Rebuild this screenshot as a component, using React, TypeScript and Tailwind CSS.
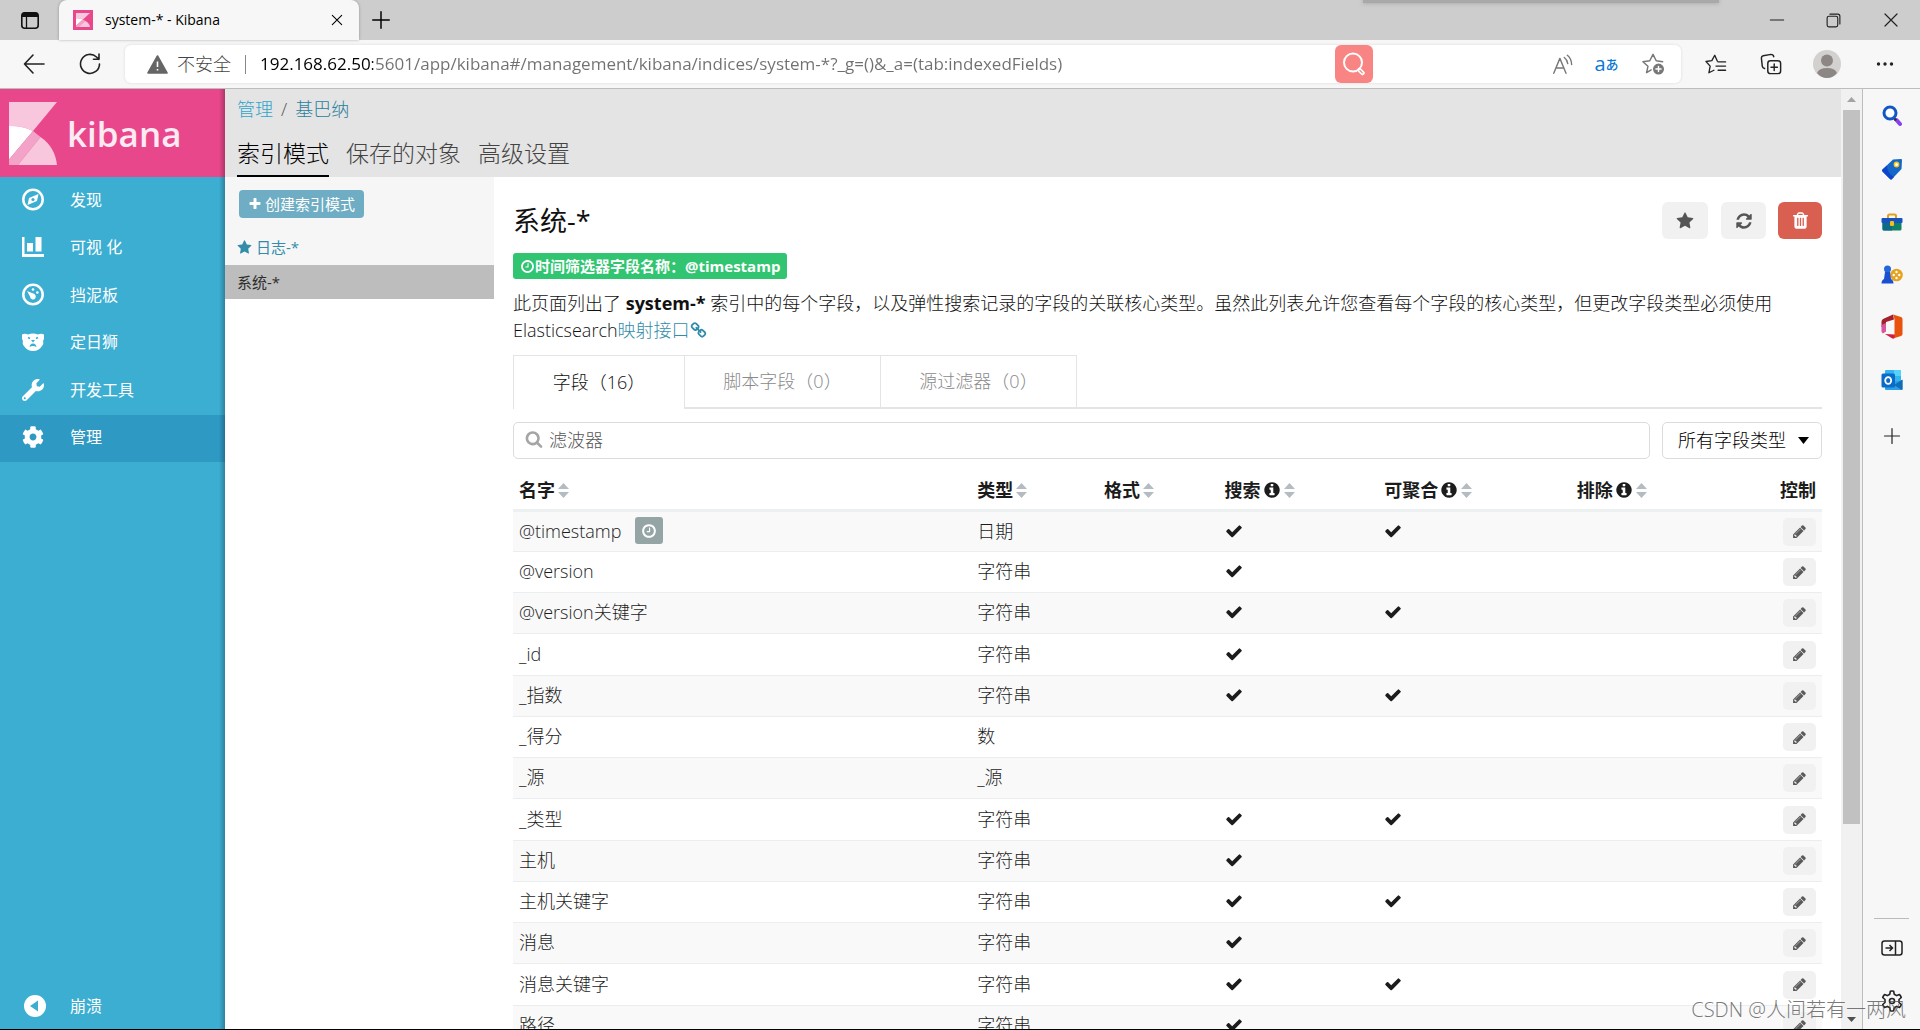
import type { ReactNode } from "react";
import { FaCog, FaWrench } from "react-icons/fa";

const GLYPHS = {
  check:
    "M1671 566q0 40-28 68l-724 724-136 136q-28 28-68 28t-68-28l-136-136-362-362q-28-28-28-68t28-68l136-136q28-28 68-28t68 28l294 295 656-657q28-28 68-28t68 28l136 136q28 28 28 68z",
  pencil:
    "M491 1536l91-91-235-235-91 91v107h128v128h107zm523-928q0-22-22-22-10 0-17 7l-542 542q-7 7-7 17 0 22 22 22 10 0 17-7l542-542q7-7 7-17zm-54-192l416 416-832 832h-416v-416zm683 96q0 53-37 90l-166 166-416-416 166-165q36-38 90-38 53 0 91 38l235 234q37 39 37 91z",
  search:
    "M1216 832q0-185-131.5-316.5t-316.5-131.5-316.5 131.5-131.5 316.5 131.5 316.5 316.5 131.5 316.5-131.5 131.5-316.5zm512 832q0 52-38 90t-90 38q-54 0-90-38l-343-342q-179 124-399 124-143 0-273.5-55.5t-225-150-150-225-55.5-273.5 55.5-273.5 150-225 225-150 273.5-55.5 273.5 55.5 225 150 150 225 55.5 273.5q0 220-124 399l343 343q37 37 37 90z",
  plus: "M1600 736v192q0 40-28 68t-68 28h-416v416q0 40-28 68t-68 28h-192q-40 0-68-28t-28-68v-416h-416q-40 0-68-28t-28-68v-192q0-40 28-68t68-28h416v-416q0-40 28-68t68-28h192q40 0 68 28t28 68v416h416q40 0 68 28t28 68z",
  star: "M1728 647q0 22-26 48l-363 354 86 500q1 7 1 20 0 21-10.5 35.5t-30.5 14.5q-19 0-40-12l-449-236-449 236q-22 12-40 12-21 0-31.5-14.5t-10.5-35.5q0-6 2-20l86-500-364-354q-25-27-25-48 0-37 56-46l502-73 225-455q19-41 49-41t49 41l225 455 502 73q56 9 56 46z",
  clock:
    "M1024 544v448q0 14-9 23t-23 9h-320q-14 0-23-9t-9-23v-64q0-14 9-23t23-9h224v-352q0-14 9-23t23-9h64q14 0 23 9t9 23zm416 352q0-148-73-273t-198-198-273-73-273 73-198 198-73 273 73 273 198 198 273 73 273-73 198-198 73-273zm224 0q0 209-103 385.5t-279.5 279.5-385.5 103-385.5-103-279.5-279.5-103-385.5 103-385.5 279.5-279.5 385.5-103 385.5 103 279.5 279.5 103 385.5z",
  info: "M1152 1376v-160q0-14-9-23t-23-9h-96v-512q0-14-9-23t-23-9h-320q-14 0-23 9t-9 23v160q0 14 9 23t23 9h96v320h-96q-14 0-23 9t-9 23v160q0 14 9 23t23 9h448q14 0 23-9t9-23zm-128-896v-160q0-14-9-23t-23-9h-192q-14 0-23 9t-9 23v160q0 14 9 23t23 9h192q14 0 23-9t9-23zm640 416q0 209-103 385.5t-279.5 279.5-385.5 103-385.5-103-279.5-279.5-103-385.5 103-385.5 279.5-279.5 385.5-103 385.5 103 279.5 279.5 103 385.5z",
  refresh:
    "M1639 1056q0 5-1 7-64 268-268 434.5t-478 166.5q-146 0-282.5-55t-243.5-157l-129 129q-19 19-45 19t-45-19-19-45v-448q0-26 19-45t45-19h448q26 0 45 19t19 45-19 45l-137 137q71 66 161 102t187 36q134 0 250-65t186-179q11-17 53-117 8-23 30-23h192q13 0 22.5 9.5t9.5 22.5zm25-800v448q0 26-19 45t-45 19h-448q-26 0-45-19t-19-45 19-45l138-138q-148-137-349-137-134 0-250 65t-186 179q-11 17-53 117-8 23-30 23h-199q-13 0-22.5-9.5t-9.5-22.5v-7q65-268 270-434.5t480-166.5q146 0 284 55.5t245 156.5l130-129q19-19 45-19t45 19 19 45z",
  trash:
    "M704 1376v-704q0-14-9-23t-23-9h-64q-14 0-23 9t-9 23v704q0 14 9 23t23 9h64q14 0 23-9t9-23zm256 0v-704q0-14-9-23t-23-9h-64q-14 0-23 9t-9 23v704q0 14 9 23t23 9h64q14 0 23-9t9-23zm256 0v-704q0-14-9-23t-23-9h-64q-14 0-23 9t-9 23v704q0 14 9 23t23 9h64q14 0 23-9t9-23zm-544-992h448l-48-117q-7-9-17-11h-317q-10 2-17 11zm928 32v64q0 14-9 23t-23 9h-96v948q0 83-47 143.5t-113 60.5h-832q-66 0-113-58.5t-47-141.5v-952h-96q-14 0-23-9t-9-23v-64q0-14 9-23t23-9h309l70-167q15-37 54-63t79-26h320q40 0 79 26t54 63l70 167h309q14 0 23 9t9 23z",
  chain:
    "M1520 1216q0-40-28-68l-208-208q-28-28-68-28-42 0-72 32 3 3 19 18.5t21.5 21.5 15 19 13 25.5 3.5 27.5q0 40-28 68t-68 28q-15 0-27.5-3.5t-25.5-13-19-15-21.5-21.5-18.5-19q-33 31-33 73 0 40 28 68l206 207q27 27 68 27 40 0 68-26l147-146q28-28 28-67zm-703-705q0-40-28-68l-206-207q-28-28-68-28-39 0-68 27l-147 146q-28 28-28 67 0 40 28 68l208 208q27 27 68 27 42 0 72-31-3-3-19-18.5t-21.5-21.5-15-19-13-25.5-3.5-27.5q0-40 28-68t68-28q15 0 27.5 3.5t25.5 13 19 15 21.5 21.5 18.5 19q33-31 33-73zm895 705q0 120-85 203l-147 146q-83 83-203 83-121 0-204-85l-206-207q-83-83-83-203 0-123 88-209l-88-88q-86 88-208 88-120 0-204-84l-208-208q-84-84-84-204t85-203l147-146q83-83 203-83 121 0 204 85l206 207q83 83 83 203 0 123-88 209l88 88q86-88 208-88 120 0 204 84l208 208q84 84 84 204z",
};

function Glyph({ name, className }: { name: keyof typeof GLYPHS; className: string }) {
  return (
    <svg viewBox="0 0 1792 1792" fill="currentColor" aria-hidden="true" className={className}>
      <path d={GLYPHS[name]} />
    </svg>
  );
}

function Line({ children, size = 24, className = "" }: { children: ReactNode; size?: number; className?: string }) {
  return (
    <svg
      width={size}
      height={size}
      viewBox="0 0 24 24"
      fill="none"
      stroke="currentColor"
      strokeWidth="1.6"
      strokeLinecap="round"
      strokeLinejoin="round"
      aria-hidden="true"
      className={className}
    >
      {children}
    </svg>
  );
}

function IconButton({ label, children, className = "" }: { label: string; children: ReactNode; className?: string }) {
  return (
    <button type="button" aria-label={label} className={`flex shrink-0 items-center justify-center ${className}`}>
      {children}
    </button>
  );
}

function KibanaMark({ className }: { className: string }) {
  return (
    <svg viewBox="0 0 48 63" preserveAspectRatio="none" aria-hidden="true" className={className}>
      <path d="M0 0H48L24 29Q13 23.500 0 24z" fill="#f8c6dd" />
      <path d="M0 24Q13 23.500 24 29L0 57.500z" fill="#fff" />
      <path d="M24 29L31.500 35L9 63H0V57.500z" fill="#f3a3c7" />
      <path d="M31.500 35Q46 45 48 63H9z" fill="#f8c6dd" />
    </svg>
  );
}

/* ---------- Browser chrome ---------- */

function TabStrip() {
  return (
    <div className="relative flex h-10 shrink-0 items-stretch bg-[#cdcdcd]">
      <IconButton label="标签页操作菜单" className="w-[59px]">
        <svg width="20" height="19" viewBox="0 0 20 19" aria-hidden="true">
          <rect x="1.8" y="1.8" width="16.4" height="15.4" rx="3" fill="none" stroke="#111" strokeWidth="1.6" />
          <path d="M2 3.5Q2 1.5 4.500 1.500H15.500Q18 1.500 18 3.500V6H2z" fill="#111" />
          <path d="M6.500 6V17" stroke="#111" strokeWidth="1.3" />
        </svg>
      </IconButton>
      <div className="flex w-[300px] items-center rounded-t-lg bg-[#f7f7f7] pr-3 pl-[14px] shadow-[0_0_3px_rgba(0,0,0,0.3)]">
        <span className="flex h-5 w-5 items-center justify-center bg-[#e8478b] p-[3px]">
          <KibanaMark className="h-full w-full" />
        </span>
        <span className="ml-3 flex-1 text-sm text-black">system-* - Kibana</span>
        <IconButton label="关闭标签页" className="h-5 w-5 text-black">
          <Line size={16}>
            <path d="M5 5L19 19M19 5L5 19" />
          </Line>
        </IconButton>
      </div>
      <IconButton label="新建标签页" className="w-11 text-black">
        <Line size={22}>
          <path d="M12 3V21M3 12H21" />
        </Line>
      </IconButton>
      <div className="absolute top-0 left-[71%] h-[3px] w-[356px] bg-[#a9a9a9] shadow-[0_0_4px_#999]" />
      <div className="ml-auto flex pr-px text-[#222]">
        <IconButton label="最小化" className="w-[57px]">
          <Line size={16}>
            <path d="M2 12H22" />
          </Line>
        </IconButton>
        <IconButton label="还原" className="w-[57px]">
          <Line size={17}>
            <rect x="3" y="6" width="15" height="15" rx="2.500" />
            <path d="M7 3H18Q21 3 21 6V17" />
          </Line>
        </IconButton>
        <IconButton label="关闭" className="w-[57px]">
          <Line size={18}>
            <path d="M4 4L20 20M20 4L4 20" />
          </Line>
        </IconButton>
      </div>
    </div>
  );
}

function Toolbar() {
  return (
    <div className="flex h-[49px] shrink-0 items-center border-b border-[#bdbdbd] bg-[#f7f7f7] text-[#222]">
      <IconButton label="后退" className="ml-[6px] h-9 w-14">
        <Line size={24}>
          <path d="M22 12H2.500M11 3L2.500 12L11 21" />
        </Line>
      </IconButton>
      <IconButton label="刷新" className="h-9 w-14">
        <Line size={24}>
          <path d="M21.500 12A9.500 9.500 0 1 1 18.500 5L21 7.300M21 2V7.300H15.500" />
        </Line>
      </IconButton>
      <div className="ml-[7px] flex h-[38px] flex-1 items-center rounded-md bg-white pr-[6px] pl-[22px] shadow-[0_0_3px_rgba(0,0,0,0.12)]">
        <svg width="21" height="19" viewBox="0 0 21 19" aria-hidden="true">
          <path d="M10.500 1L20 18H1z" fill="#666" stroke="#666" strokeWidth="1.600" strokeLinejoin="round" />
          <path d="M10.500 6.500V12M10.500 14V15.600" stroke="#fff" strokeWidth="1.600" />
        </svg>
        <span className="ml-[9px] text-[18px] font-light text-[#444]">不安全</span>
        <span className="mx-[14px] h-[19px] w-px bg-[#888]" />
        <input
          aria-label="地址栏"
          readOnly
          value="192.168.62.50:5601/app/kibana#/management/kibana/indices/system-*?_g=()&_a=(tab:indexedFields)"
          className="min-w-0 flex-1 bg-[linear-gradient(90deg,#000_0_113px,#707070_113px)] bg-clip-text text-[17px] text-transparent outline-none"
        />
        <IconButton label="搜图" className="mr-[167px] h-[38px] w-[38px] rounded-md bg-[#f88583] text-white">
          <svg width="24" height="24" viewBox="0 0 24 24" fill="none" stroke="currentColor" aria-hidden="true">
            <circle cx="11" cy="10.500" r="9" strokeWidth="2" />
            <path d="M17.500 18L20.500 21" strokeWidth="4.500" strokeLinecap="round" />
            <path d="M18 18.500L20.300 20.800" stroke="#f88583" strokeWidth="1.200" strokeLinecap="round" />
          </svg>
        </IconButton>
        <div className="flex items-center">
          <IconButton label="大声朗读" className="w-[45px] text-[#777]">
            <Line size={21}>
              <path d="M2 22L9 5L16 22M4.500 16H13.500M14 4Q17 6 18 11M17.500 1.500Q22 5 22.500 12" />
            </Line>
          </IconButton>
          <button type="button" aria-label="翻译" className="flex w-[45px] items-center justify-center pr-0.5 text-[#0a78d4]">
            <span className="text-[20px] leading-5">a</span>
            <span className="text-[13px] leading-5 font-medium">あ</span>
          </button>
          <IconButton label="添加到收藏夹" className="w-[45px] text-[#777]">
            <Line size={22} className="overflow-visible">
              <path d="M10 18.500L5 21.500L6.500 14.500L1 9.500L8.500 8.500L12 1.500L15.500 8.500L22.500 9.500" />
              <circle cx="18" cy="17.500" r="5.200" fill="currentColor" />
              <path d="M18 14.700V20.300M15.200 17.500H20.800" stroke="#fff" />
            </Line>
          </IconButton>
        </div>
      </div>
      <div className="flex items-center pl-[7px]">
        <IconButton label="收藏夹" className="w-14">
          <Line size={20} className="overflow-visible">
            <path d="M13.500 8.500L10.500 1.500L7 8L0 9L5 14.500L3.500 22.500L9.500 19.500M14.500 9.500H23.500M12 14.500H23.500M14.500 19.500H23.500" />
          </Line>
        </IconButton>
        <IconButton label="集锦" className="w-[54px]">
          <Line size={22}>
            <rect x="8.500" y="8.500" width="14" height="14" rx="3" />
            <path d="M15.500 12V19M12 15.500H19M5 17Q3 16.500 2.500 14.500L1.500 5.500Q1.500 3.500 3.500 3L12 1.500Q14.500 1.500 15 4" />
          </Line>
        </IconButton>
        <IconButton label="个人资料" className="w-[58px]">
          <svg width="28" height="28" viewBox="0 0 28 28" aria-hidden="true">
            <circle cx="14" cy="14" r="14" fill="#d3d1cf" />
            <circle cx="14" cy="10.500" r="6" fill="#8c8784" />
            <path d="M4 23Q6 18 14 18T24 23Q20 28 14 28T4 23z" fill="#8c8784" />
          </svg>
        </IconButton>
        <IconButton label="设置及其他" className="mr-[6px] w-[58px]">
          <svg width="18" height="6" viewBox="0 0 18 6" fill="#222" aria-hidden="true">
            <circle cx="2.500" cy="3" r="1.700" />
            <circle cx="9" cy="3" r="1.700" />
            <circle cx="15.500" cy="3" r="1.700" />
          </svg>
        </IconButton>
      </div>
    </div>
  );
}

function EdgeSidebar() {
  return (
    <aside className="flex w-[58px] shrink-0 flex-col items-center border-l border-[#bdbdbd] bg-[#f7f7f7] pt-px text-[#222]">
      <div className="grid h-[316px] w-full shrink-0 grid-rows-6 justify-items-center">
        <IconButton label="搜索">
          <svg width="20" height="22" viewBox="0 0 20 22" aria-hidden="true">
            <path d="M14.500 15L18 19" stroke="#8a3ff0" strokeWidth="4" strokeLinecap="round" />
            <path d="M12 13L14 15.500" stroke="#333" strokeWidth="2.500" />
            <circle cx="8" cy="8" r="6" fill="#fff" stroke="#1257c6" strokeWidth="3" />
          </svg>
        </IconButton>
        <IconButton label="购物">
          <svg width="22" height="22" viewBox="0 0 22 22" aria-hidden="true">
            <path d="M12 1.500L20 1Q21 1 21 2L20.500 11L11 21Q10 22 9 21L1.500 13.500Q.5 12.500 1.500 11.500z" fill="#1466c9" />
            <path d="M1.500 11.500L6 7.500Q6 15 13 19L11 21Q10 22 9 21L1.500 13.500Q.5 12.500 1.500 11.500z" fill="#0b45cc" />
            <circle cx="15.500" cy="6.500" r="2.200" fill="#fff" stroke="#f6c40e" strokeWidth="1.400" />
          </svg>
        </IconButton>
        <IconButton label="工具">
          <svg width="22" height="18" viewBox="0 0 22 18" aria-hidden="true">
            <path d="M7 5V3Q7 1.500 8.500 1.500H13.500Q15 1.500 15 3V5" fill="none" stroke="#e0a11c" strokeWidth="2" />
            <rect x="1.500" y="9" width="19" height="8.500" rx="1.500" fill="#108067" />
            <path d="M1.500 10H11V17.500H3Q1.500 17.500 1.500 16z" fill="#0f6a86" />
            <rect x=".5" y="5" width="21" height="5" rx="1" fill="#1652c0" />
            <rect x="9" y="8" width="4" height="5" rx="1" fill="#f6bd1f" />
          </svg>
        </IconButton>
        <IconButton label="游戏">
          <svg width="22" height="19" viewBox="0 0 22 19" aria-hidden="true">
            <circle cx="15.500" cy="10" r="6.300" fill="#e5a321" />
            <circle cx="15.500" cy="7" r="1.200" fill="#fff" />
            <circle cx="15.500" cy="13" r="1.200" fill="#fff" />
            <circle cx="12.700" cy="10" r="1.200" fill="#fff" />
            <circle cx="18.300" cy="10" r="1.200" fill="#fff" />
            <circle cx="6.500" cy="4" r="3.500" fill="#2466dc" />
            <path d="M4 7H9L10 14Q12.500 15 12.500 18.500H.5Q.5 15 3 14z" fill="#1a4fd0" />
          </svg>
        </IconButton>
        <IconButton label="Microsoft 365">
          <svg width="22" height="25" viewBox="0 0 22 25" aria-hidden="true">
            <path d="M12 .5L2 5Q.5 6 .5 7.500V13L5 12V8L13 5.500z" fill="#a3202c" />
            <path d="M.5 11V18L2 19.500L5 17.500V9z" fill="#d8569c" />
            <path d="M12 .5L20 3Q21.500 3.500 21.500 5V20Q21.500 21.500 20 22L12 24.500L13.500 20V5z" fill="#e8520d" />
            <path d="M4 20L13.500 20.500V24Q12 25 10.500 24z" fill="#d11d3f" />
          </svg>
        </IconButton>
        <IconButton label="Outlook">
          <svg width="22" height="22" viewBox="0 0 22 22" aria-hidden="true">
            <path d="M4 2Q4 1 5 1H20V13H4z" fill="#35b5ee" />
            <path d="M13 1H20V7H13z" fill="#53d3fb" />
            <path d="M21.500 11V20Q21.500 21 20.500 21H5Q4 21 4 20V12H18z" fill="#2aa0e8" />
            <path d="M21.500 10.500L13 16L21 21Q21.500 20.500 21.500 20z" fill="#136cb5" />
            <rect x=".5" y="4.500" width="13.500" height="14" rx="1.500" fill="#0a6cc9" />
            <ellipse cx="7.200" cy="11.500" rx="3" ry="3.400" fill="none" stroke="#fff" strokeWidth="1.800" />
          </svg>
        </IconButton>
      </div>
      <IconButton label="自定义" className="h-[60px] w-full">
        <Line size={18}>
          <path d="M12 2V22M2 12H22" />
        </Line>
      </IconButton>
      <div className="mt-auto h-px w-[35px] bg-[#bbb]" />
      <IconButton label="隐藏侧栏" className="h-[58px] w-full">
        <svg width="22" height="16" viewBox="0 0 22 16" fill="none" stroke="#222" strokeWidth="1.500" aria-hidden="true">
          <rect x="1" y="1" width="20" height="14" rx="2.500" />
          <path d="M14.500 1V15M4.500 8H11M8.500 5L11.500 8L8.500 11" />
        </svg>
      </IconButton>
      <IconButton label="设置" className="mb-1 h-12 w-full">
        <Line size={24}>
          <path d="M9.800 5.200L10.300 2.300Q12 1.800 13.700 2.300L14.200 5.200L16.700 6.600L19.500 5.600Q20.800 6.900 21.300 8.500L19 10.500V13.500L21.300 15.500Q20.800 17.200 19.500 18.400L16.700 17.400L14.200 18.800L13.700 21.700Q12 22.200 10.300 21.700L9.800 18.800L7.300 17.400L4.500 18.400Q3.200 17.200 2.700 15.500L5 13.500V10.500L2.700 8.500Q3.200 6.900 4.500 5.600L7.300 6.600z" />
          <circle cx="12" cy="12" r="2.500" />
        </Line>
      </IconButton>
    </aside>
  );
}

/* ---------- Kibana ---------- */

const navItems: { label: string; icon: ReactNode; active?: boolean }[] = [
  {
    label: "发现",
    icon: (
      <svg viewBox="0 0 22 22" className="h-[23px] w-[22px]" aria-hidden="true">
        <circle cx="11" cy="11" r="9.700" fill="none" stroke="#fff" strokeWidth="2.500" />
        <path d="M16.500 5.500L15 12.500L5.500 16.500L7 9.500z" fill="#fff" />
        <circle cx="11" cy="11" r="1.600" fill="#3caed2" />
      </svg>
    ),
  },
  {
    label: "可视 化",
    icon: (
      <svg viewBox="0 0 22 20" className="h-5 w-[22px]" fill="#fff" aria-hidden="true">
        <path d="M0 0H2.500V17H22V20H0zM5 6H11V14.500H5zM13.500 0H19.500V14.500H13.500z" />
      </svg>
    ),
  },
  {
    label: "挡泥板",
    icon: (
      <svg viewBox="0 0 22 22" className="h-[23px] w-[22px]" aria-hidden="true">
        <circle cx="11" cy="11" r="9.700" fill="none" stroke="#fff" strokeWidth="2.500" />
        <path d="M5 7.500L12.500 10.500Q14.500 12 13.500 14.500Q12 17 9.500 15.500Q8 14.500 8 13z" fill="#fff" />
        <circle cx="11" cy="6" r="1.300" fill="#fff" />
        <circle cx="15.300" cy="9" r="1.300" fill="#fff" />
      </svg>
    ),
  },
  {
    label: "定日狮",
    icon: (
      <svg viewBox="0 0 22 18" className="h-[18px] w-[22px]" aria-hidden="true">
        <path d="M0 1.500Q3 0 6 1.500Q11-.5 16 1.500Q19 0 22 1.500V6L21 8Q22 11 20 13Q17 18 11 18T2 13Q0 11 1 8L0 6z" fill="#fff" />
        <path d="M6 4.500L8 5.500M16 4.500L14 5.500" stroke="#3caed2" strokeWidth="1.400" />
        <path d="M9 7H13L11 9.500zM7.500 14Q8 10.500 11 10.500T14.500 14Q11 11.800 7.500 14z" fill="#3caed2" />
      </svg>
    ),
  },
  { label: "开发工具", icon: <FaWrench className="h-[22px] w-[22px] text-white" /> },
  { label: "管理", icon: <FaCog className="h-[22px] w-[22px] text-white" />, active: true },
];

function KibanaNav() {
  return (
    <nav className="relative flex w-[225px] shrink-0 flex-col bg-[#3caed2]">
      <a href="#kibana" className="flex h-[88px] shrink-0 items-center bg-[#e8478b] pl-[9px] text-white">
        <KibanaMark className="h-[63px] w-12" />
        <span className="ml-[10px] font-['Open_Sans'] text-[35px] leading-none font-semibold text-[#fdeaf3]">kibana</span>
      </a>
      <ul className="grid h-[285px] shrink-0 grid-rows-6">
        {navItems.map((item) => (
          <li key={item.label} className={item.active ? "bg-[#2e99c3]" : ""}>
            <a href={`#${item.label}`} className="flex h-full items-center pb-0.5 pl-[22px] text-white">
              <span className="flex w-[22px] justify-center">{item.icon}</span>
              <span className="ml-[26px] text-base">{item.label}</span>
            </a>
          </li>
        ))}
      </ul>
      <button type="button" className="mt-auto flex h-[46px] shrink-0 items-center pl-6 text-white">
        <svg viewBox="0 0 22 22" className="h-[22px] w-[22px]" aria-hidden="true">
          <circle cx="11" cy="11" r="11" fill="#fff" />
          <path d="M14 5.500V16.500L6 11z" fill="#3caed2" />
        </svg>
        <span className="ml-6 text-base">崩溃</span>
      </button>
      <div className="pointer-events-none absolute inset-y-0 right-0 w-[6px] bg-linear-to-r from-transparent to-black/25" />
    </nav>
  );
}

const check = <Glyph name="check" className="h-[18px] w-[18px]" />;

const rows: { name: string; type: string; search?: boolean; aggregate?: boolean; time?: boolean }[] = [
  { name: "@timestamp", type: "日期", search: true, aggregate: true, time: true },
  { name: "@version", type: "字符串", search: true },
  { name: "@version关键字", type: "字符串", search: true, aggregate: true },
  { name: "_id", type: "字符串", search: true },
  { name: "_指数", type: "字符串", search: true, aggregate: true },
  { name: "_得分", type: "数" },
  { name: "_源", type: "_源" },
  { name: "_类型", type: "字符串", search: true, aggregate: true },
  { name: "主机", type: "字符串", search: true },
  { name: "主机关键字", type: "字符串", search: true, aggregate: true },
  { name: "消息", type: "字符串", search: true },
  { name: "消息关键字", type: "字符串", search: true, aggregate: true },
  { name: "路径", type: "字符串", search: true },
];

const columns = [
  { label: "名字", width: "w-[35%]", sort: true },
  { label: "类型", width: "w-[9.7%]", sort: true },
  { label: "格式", width: "w-[9.2%]", sort: true },
  { label: "搜索", width: "w-[12.2%]", sort: true, info: true },
  { label: "可聚合", width: "w-[14.7%]", sort: true, info: true },
  { label: "排除", width: "w-[13%]", sort: true, info: true },
  { label: "控制", width: "", sort: false },
];

function FieldsTable() {
  return (
    <table className="mt-[13px] w-full table-fixed border-collapse text-[18px] leading-6 text-[#1c1c1c]">
      <thead>
        <tr className="h-[38px] border-b-[3px] border-[#ecf0f0]">
          {columns.map((c) => (
            <th key={c.label} scope="col" className={`px-[6px] font-bold ${c.width} ${c.sort ? "text-left" : "text-right"}`}>
              {c.sort ? (
                <button type="button" className="inline-flex items-center font-bold">
                  {c.label}
                  {c.info && <Glyph name="info" className="ml-0.5 h-[18px] w-[18px]" />}
                  <svg width="11" height="15" viewBox="0 0 11 15" fill="#b4bcc2" aria-hidden="true" className="ml-[3px]">
                    <path d="M5.500 0L11 6H0zM5.500 15L0 9H11z" />
                  </svg>
                </button>
              ) : (
                c.label
              )}
            </th>
          ))}
        </tr>
      </thead>
      <tbody>
        {rows.map((r) => (
          <tr key={r.name} className="h-[41px] border-b border-[#ebeeee] odd:bg-[#f9f9f9] [&:nth-child(4n)]:h-[42px]">
            <td className="px-[6px] pb-px">
              <span className="flex h-7 items-center">
                {r.name}
                {r.time && (
                  <span className="ml-[14px] flex h-[27px] w-7 items-center justify-center rounded-[3px] bg-[#95a5a6] text-white">
                    <Glyph name="clock" className="h-4 w-4" />
                  </span>
                )}
              </span>
            </td>
            <td className="px-[6px] pb-px">{r.type}</td>
            <td />
            <td className="px-[6px] pb-px">{r.search && check}</td>
            <td className="px-[6px] pb-px">{r.aggregate && check}</td>
            <td />
            <td className="px-[6px] pt-px">
              <button
                type="button"
                aria-label={`编辑 ${r.name}`}
                className="ml-auto flex h-7 w-[33px] items-center justify-center rounded-[5px] bg-[#f1f1f1] text-[#5a5a5a]"
              >
                <Glyph name="pencil" className="h-[15px] w-[15px]" />
              </button>
            </td>
          </tr>
        ))}
      </tbody>
    </table>
  );
}

function IndexPatternPage() {
  return (
    <section className="min-w-0 flex-1 overflow-hidden pt-[25px] pr-[19px] pl-[19px] text-[#111]">
      <div className="flex items-start">
        <h1 className="flex-1 text-[27px] leading-[38px] font-normal">系统-*</h1>
        <IconButton label="设为默认索引" className="mr-[13px] h-[37px] w-[46px] rounded-md bg-[#f1f1f1] text-[#555]">
          <Glyph name="star" className="h-[18px] w-[18px]" />
        </IconButton>
        <IconButton label="刷新字段列表" className="mr-3 h-[37px] w-[45px] rounded-md bg-[#f1f1f1] text-[#555]">
          <Glyph name="refresh" className="h-[18px] w-[18px]" />
        </IconButton>
        <IconButton label="删除索引模式" className="h-[37px] w-11 rounded-md bg-[#d96050] text-white">
          <Glyph name="trash" className="h-[19px] w-[19px]" />
        </IconButton>
      </div>
      <div className="mt-[13px] flex">
        <span className="flex h-[26px] items-center rounded-[3px] bg-[#31c471] px-[7px] text-[15px] font-bold text-white">
          <Glyph name="clock" className="h-[15px] w-[15px]" />
          时间筛选器字段名称：@timestamp
        </span>
      </div>
      <p className="mt-[11px] text-[18px] leading-[27px]">
        此页面列出了 <b className="font-bold">system-*</b>{" "}
        索引中的每个字段，以及弹性搜索记录的字段的关联核心类型。虽然此列表允许您查看每个字段的核心类型，但更改字段类型必须使用
        <br />
        Elasticsearch
        <a href="#mapping" className="text-[#328caa]">
          映射接口
          <Glyph name="chain" className="inline h-[17px] w-[17px] align-[-2px]" />
        </a>
      </p>
      <div role="tablist" className="mt-[11px] flex h-[54px] text-[18px]">
        <button role="tab" aria-selected="true" type="button" className="w-[171px] border-t border-l border-[#e4e4e4]">
          字段（16）
        </button>
        <button role="tab" aria-selected="false" type="button" className="w-[196px] border-t border-b-2 border-l border-[#e4e4e4] text-[#8a8a8a]">
          脚本字段（0）
        </button>
        <button role="tab" aria-selected="false" type="button" className="w-[197px] border-x border-t border-b-2 border-[#e4e4e4] text-[#8a8a8a]">
          源过滤器（0）
        </button>
        <span className="flex-1 border-b-2 border-[#e4e4e4]" />
      </div>
      <div className="mt-[13px] flex gap-3 text-[18px]">
        <label className="flex h-[37px] flex-1 items-center rounded-[5px] border border-[#dcdcdc] pl-[11px]">
          <Glyph name="search" className="mb-1 h-[18px] w-[18px] text-[#a5a5a5]" />
          <input aria-label="滤波器" placeholder="滤波器" className="ml-[6px] min-w-0 flex-1 outline-none placeholder:text-[#555]" />
        </label>
        <div className="relative w-[160px]">
          <select
            aria-label="字段类型"
            className="h-[37px] w-full appearance-none rounded-[5px] border border-[#dcdcdc] bg-white pl-[15px] text-black outline-none"
          >
            <option>所有字段类型</option>
          </select>
          <svg width="11" height="7" viewBox="0 0 11 7" aria-hidden="true" className="pointer-events-none absolute top-[15px] right-[13px]">
            <path d="M0 0H11L5.500 7z" fill="#000" />
          </svg>
        </div>
      </div>
      <FieldsTable />
    </section>
  );
}

function KibanaMain() {
  return (
    <main className="flex min-w-0 flex-1 flex-col bg-white font-light">
      <header className="flex h-[88px] shrink-0 flex-col bg-[#e4e4e4] pl-3">
        <div className="mt-[6px] flex h-7 items-center gap-2 text-[18px]">
          <a href="#management" className="text-[#2fa5cb]">
            管理
          </a>
          <span className="text-[#555]">/</span>
          <a href="#management-kibana" className="text-[#2a7f9c]">
            基巴纳
          </a>
        </div>
        <div className="mt-auto flex h-[46px] gap-[17px] text-[23px] leading-[44px] text-[#444]">
          <a href="#indices" className="border-b-2 border-black text-black">
            索引模式
          </a>
          <a href="#objects">保存的对象</a>
          <a href="#settings">高级设置</a>
        </div>
      </header>
      <div className="flex min-h-0 flex-1">
        <aside className="w-[269px] shrink-0 font-normal">
          <div className="flex h-[88px] flex-col bg-[#f6f6f6] pl-3">
            <button
              type="button"
              className="mt-[13px] ml-0.5 flex h-7 items-center gap-[3px] self-start rounded bg-[#6eadc3] px-[9px] text-[15px] text-white"
            >
              <Glyph name="plus" className="h-[14px] w-[14px]" />
              创建索引模式
            </button>
            <a href="#logs" className="mt-auto flex h-[34px] items-center gap-1 pb-px text-[15px] text-[#328caa]">
              <Glyph name="star" className="h-[15px] w-[15px]" />
              日志-*
            </a>
          </div>
          <a href="#system" className="flex h-[34px] items-center bg-[#bdbdbd] pl-3 text-[15px] text-[#2d2d2d]">
            系统-*
          </a>
        </aside>
        <IndexPatternPage />
      </div>
    </main>
  );
}

function ScrollTrack() {
  return (
    <div className="flex w-[21px] shrink-0 flex-col items-center bg-[#f1f1f1]" aria-hidden="true">
      <svg width="9" height="5" viewBox="0 0 9 5" className="my-2 shrink-0">
        <path d="M4.500 0L9 5H0z" fill="#a3a3a3" />
      </svg>
      <div className="h-[76%] w-[17px] bg-[#c1c1c1]" />
      <svg width="9" height="5" viewBox="0 0 9 5" className="mt-auto mb-[7px] shrink-0">
        <path d="M4.500 5L0 0H9z" fill="#505050" />
      </svg>
    </div>
  );
}

export default function App() {
  return (
    <div className="relative flex h-screen flex-col overflow-hidden border-b border-black bg-white font-['Open_Sans','Noto_Sans_CJK_SC',sans-serif]">
      <TabStrip />
      <Toolbar />
      <div className="flex min-h-0 flex-1">
        <KibanaNav />
        <KibanaMain />
        <ScrollTrack />
        <EdgeSidebar />
      </div>
      <div className="pointer-events-none absolute right-[14px] bottom-[5px] text-[20px] leading-7 font-light text-[#555]/80">
        CSDN @人间若有一两风
      </div>
    </div>
  );
}
